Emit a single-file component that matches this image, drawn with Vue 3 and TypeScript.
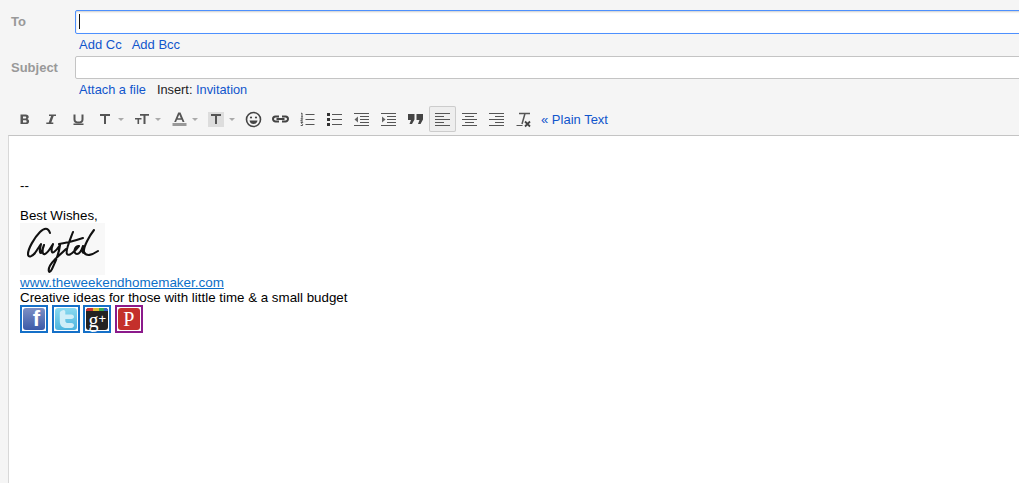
<script setup lang="ts">
const rows = ['To']
</script>

<template>
  <div class="page">
    <div class="field first">
      <label class="label">{{ rows[0] }}</label>
      <div class="input focus"><span class="caret"></span></div>
    </div>
    <div class="links top"><a>Add Cc</a><a>Add Bcc</a></div>
    <div class="field">
      <label class="label">Subject</label>
      <div class="input"></div>
    </div>
    <div class="links bottom"><a>Attach a file</a><span class="ins">Insert: <a>Invitation</a></span></div>
    <div class="toolbar">
      <span class="btn"><svg viewBox="0 0 27 26"><path transform="translate(0 1)" d="M9.500 7.500h5.200c2 0 3 1 3 2.400 0 1-.6 1.800-1.500 2.100 1.200.3 1.900 1.200 1.900 2.400 0 1.700-1.200 2.600-3.300 2.600H9.500z M12 9.500v2h2c.8 0 1.200-.4 1.200-1s-.4-1-1.200-1z M12 13.300v2.300h2.300c.9 0 1.300-.4 1.300-1.200s-.5-1.100-1.300-1.100z" fill="#555" fill-rule="evenodd"/></svg></span>
      <span class="btn"><svg viewBox="0 0 27 26"><path transform="translate(0 1)" d="M11 7.500h7v1.600h-2.300l-2.400 6.300h2v1.600h-7v-1.600h2.400l2.400-6.300H11z" fill="#555"/></svg></span>
      <span class="btn"><svg viewBox="0 0 27 26"><g transform="translate(0 1)"><path d="M9.500 7.500v5c0 2 1.500 3 4 3s4-1 4-3v-5" fill="none" stroke="#555" stroke-width="2"/><rect x="8.500" y="16.500" width="10" height="1.500" fill="#555"/></g></svg></span>
      <span class="btn wide"><svg viewBox="0 0 27 26"><path d="M8 8h10v2h-4v8h-2v-8H8z" fill="#555"/></svg><i class="arrow"></i></span>
      <span class="btn wide"><svg viewBox="0 0 27 26"><path d="M6 12h6.500v1.600h-2.400V18H8.500v-4.400H6zM11 8h9v1.800h-3.500V18h-2V9.800H11z" fill="#555"/></svg><i class="arrow"></i></span>
      <span class="btn wide"><svg viewBox="0 0 27 26"><path d="M12.200 6.500h2.300l4 9.500h-1.900l-.9-2.300h-4.700l-.9 2.300H8.200zM13.300 8.600l-1.600 3.600h3.100z" fill="#555" fill-rule="evenodd"/><rect x="6.500" y="17" width="14" height="3" fill="#999"/></svg><i class="arrow"></i></span>
      <span class="btn wide"><svg viewBox="0 0 27 26"><rect x="5" y="6" width="16" height="15" fill="#ddd"/><path d="M8 8h10v2h-4v8h-2v-8H8z" fill="#555"/></svg><i class="arrow"></i></span>
      <span class="btn"><svg viewBox="0 0 27 26"><circle cx="13.500" cy="13.500" r="7" fill="none" stroke="#444" stroke-width="1.600"/><circle cx="11" cy="11.500" r="1.100" fill="#444"/><circle cx="16" cy="11.500" r="1.100" fill="#444"/><path d="M9.500 14.500h8c-.4 2.400-2 3.600-4 3.600s-3.600-1.200-4-3.600z" fill="#444"/></svg></span>
      <span class="btn"><svg viewBox="0 0 27 26"><path d="M12 10.500H8.500a2.500 2.500 0 0 0 0 5H12M15 10.500h3.500a2.500 2.500 0 0 1 0 5H15M9.500 13h8" fill="none" stroke="#444" stroke-width="2"/></svg></span>
      <span class="btn"><svg viewBox="0 0 27 26"><path d="M11.500 8.500h9M11.500 13.500h9M11.500 18.500h9" stroke="#555"/><path d="M7 7.500l1-.5v4M7 11h2M6.700 12.700h2l-2 2.300h2.300M6.700 16.500h2l-1 1 1 1.200-.2.800h-1.800" fill="none" stroke="#444" stroke-width=".9"/></svg></span>
      <span class="btn"><svg viewBox="0 0 27 26"><rect x="6" y="7" width="3" height="3" fill="#333"/><rect x="6" y="12" width="3" height="3" fill="#333"/><rect x="6" y="17" width="3" height="3" fill="#333"/><path d="M11 8.500h10M11 13.500h10M11 18.500h10" stroke="#555"/></svg></span>
      <span class="btn"><svg viewBox="0 0 27 26"><path d="M6 7.500h15M12 10.500h9M12 13.500h9M12 16.500h9M6 19.500h15" stroke="#555"/><path d="M10 10.500v6l-3.500-3z" fill="#666"/></svg></span>
      <span class="btn"><svg viewBox="0 0 27 26"><path d="M6 7.500h15M12 10.500h9M12 13.500h9M12 16.500h9M6 19.500h15" stroke="#555"/><path d="M7 10.500v6l3.500-3z" fill="#666"/></svg></span>
      <span class="btn"><svg viewBox="0 0 27 26"><path d="M6 8h6.500v5.500l-2.500 4.500H7.500l1.500-4H6zM14.500 8H21v5.500L18.500 18H16l1.500-4h-3z" fill="#444"/></svg></span>
      <span class="btn active"><svg viewBox="0 0 27 26"><path d="M6 7.500h15M6 10.500h9M6 13.500h15M6 16.500h9M6 19.500h15" stroke="#555"/></svg></span>
      <span class="btn"><svg viewBox="0 0 27 26"><path d="M6 7.500h15M9 10.500h9M6 13.500h15M9 16.500h9M6 19.500h15" stroke="#555"/></svg></span>
      <span class="btn"><svg viewBox="0 0 27 26"><path d="M6 7.500h15M12 10.500h9M6 13.500h15M12 16.500h9M6 19.500h15" stroke="#555"/></svg></span>
      <span class="btn"><svg viewBox="0 0 27 26"><path d="M9 7.500h11M15 7.500l-3 10.500" fill="none" stroke="#555" stroke-width="1.500"/><path d="M6.500 19.500h6" stroke="#555"/><path d="M15 15.500l5 5M20 15.500l-5 5" stroke="#444" stroke-width="1.800"/></svg></span>
      <a class="plain">« Plain Text</a>
    </div>
    <div class="body">
      <div class="line"><br /></div>
      <div class="line"><br /></div>
      <div class="line">--</div>
      <div class="line"><br /></div>
      <div class="line">Best Wishes,</div>
      <div class="sig">
        <svg viewBox="0 0 85 52" width="85" height="52">
          <path d="M30 10C28 4 24 5 20 9 14 15 8 26 8 31 8 35 12 34 15 30 17 27 19 24 21 21 20 25 19 30 21 30 22 29 23 24 24 22 22 27 22 32 25 31 28 30 31 24 33 21 31 26 31 31 34 29 37 27 38 25 40 22 39 30 35 40 32 46 30 50 28 50 29 45 31 38 38 34 46 26M53 9C50 17 45 28 47 31 49 34 55 28 59 23M39 21C46 20 54 18 63 15M59 23C54 23 53 31 57 31 60 31 62 26 63 23 62 27 62 30 64 30M74 7C70 12 63 24 64 29 66 34 72 32 78 28" fill="none" stroke="#111" stroke-width="2.100" stroke-linecap="round" stroke-linejoin="round"/>
        </svg>
      </div>
      <a class="site">www.theweekendhomemaker.com</a>
      <div class="line">Creative ideas for those with little time &amp; a small budget</div>
      <div class="social">
        <span class="soc"><span class="face fb"><b>f</b></span></span>
        <span class="soc"><span class="face tw"><svg viewBox="0 0 22 22"><path d="M7 2.500c1.500-1 3-.5 3.300 1v3h6c1.700 0 2.700 1 2.700 2.300s-1 2.200-2.700 2.200h-6v1.500c0 2 1 2.500 3 2.500h3c1.700 0 2.700 1 2.700 2.300S18 20 16.300 20h-4.800C7 20 4.800 17.500 4.800 13V5c0-1 1-2 2.200-2.500z" fill="#cfeef8"/></svg></span></span>
        <span class="soc"><span class="face gp"><i class="stripe"></i><span class="g">g</span><span class="plus">+</span></span></span>
        <span class="soc purple"><span class="face pin"><b>P</b></span></span>
      </div>
    </div>
  </div>
</template>

<style>
html, body { margin: 0; background: #f5f5f5; overflow: hidden; }
</style>

<style scoped>
.page { width: 1019px; height: 483px; overflow: hidden; background: #f5f5f5; font: 13px/15px "Liberation Sans", Arial, sans-serif; color: #222; display: flex; flex-direction: column; }
.field { display: flex; height: 23px; }
.first { margin-top: 10px; height: 24px; }
.label { width: 75px; box-sizing: border-box; padding-left: 11px; font-weight: bold; color: #999; line-height: 23px; flex: none; }
.input { flex: none; width: 960px; box-sizing: border-box; background: #fff; border: 1px solid #c4c4c4; border-radius: 2px; }
.focus { border-color: #4d90fe; box-shadow: inset 0 1px 2px rgba(0,0,0,.2); padding: 3px 0 0 3px; height: 24px; }
.caret { display: block; width: 1px; height: 15px; background: #111; }
.links { height: 22px; padding-left: 79px; display: flex; }
.top { line-height: 21px; gap: 10px; }
.bottom { line-height: 22px; gap: 11px; font-size: 12.8px; }
.links a, .plain { color: #15c; }
.ins { color: #222; }
.toolbar { display: flex; align-items: center; height: 26px; padding-left: 11px; margin-top: 5px; margin-bottom: 3px; }
.btn { position: relative; display: block; width: 27px; height: 26px; flex: none; box-sizing: border-box; }
.btn svg { display: block; width: 27px; height: 26px; }
.wide { width: 37px; }
.arrow { position: absolute; left: 26px; top: 12px; width: 0; height: 0; border: 3px solid transparent; border-top: 3px solid #aaa; border-bottom: 0; }
.active { background: #eee; box-shadow: inset 0 0 0 1px #ccc; border-radius: 2px; }
.plain { margin-left: 4px; font-size: 13px; }
.body { flex: 1; margin-left: 8px; background: #fff; border-left: 1px solid #d8d8d8; border-top: 1px solid #c4c4c4; padding: 12px 0 0 11px; color: #000; font-size: 13.33px; }
.line { height: 15px; }
.sig { height: 52px; width: 85px; background: #f8f8f8; }
.sig svg { display: block; }
.site { display: block; height: 15px; color: #0c6fc8; text-decoration: underline; font-size: 13.45px; }
.social { display: flex; gap: 3.6px; }
.soc { display: block; width: 28px; height: 28px; box-sizing: border-box; border: 2px solid #1570c8; padding: 1px; background: #fff; }
.purple { border-color: #8b1a8b; }
.face { position: relative; display: block; height: 22px; border-radius: 3px; color: #fff; text-align: center; font-family: "Liberation Sans", sans-serif; }
.face svg { display: block; width: 22px; height: 22px; }
.fb { box-sizing: border-box; background: linear-gradient(#7d8fc4, #3b5aa8); font-size: 22px; line-height: 22px; padding-left: 5px; }
.tw { background: linear-gradient(#8adaf0, #4db4de); }
.gp { background: #222; font-family: "Liberation Serif", serif; line-height: 22px; }
.g { font-size: 20px; }
.plus { font-size: 13px; vertical-align: 4px; font-family: "Liberation Sans", sans-serif; }
.stripe { position: absolute; left: 0; right: 0; top: 0; height: 3px; border-radius: 3px 3px 0 0; background: linear-gradient(90deg, #c33 0 30%, #db3 30% 60%, #3a5 60% 80%, #36c 80%); }
.pin { background: #c4302b; font-family: "Liberation Serif", serif; font-size: 20px; line-height: 22px; }
.pin b { font-weight: normal; }
</style>
